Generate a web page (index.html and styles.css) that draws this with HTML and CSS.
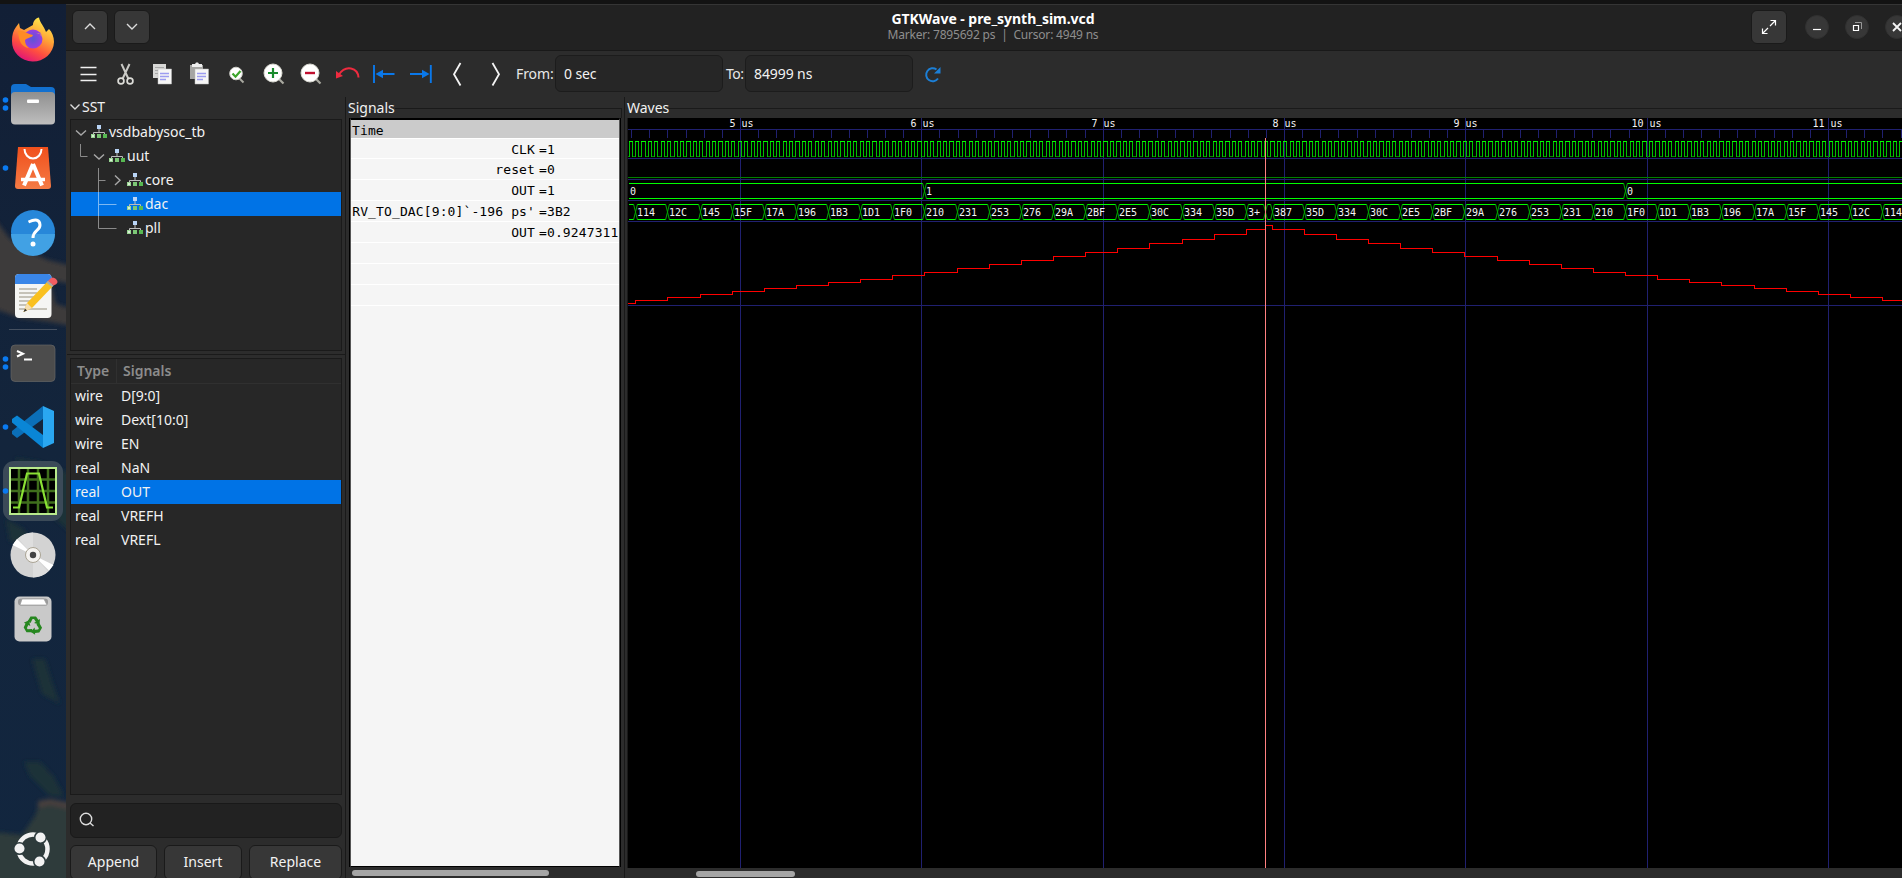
FILE: index.html
```html
<!DOCTYPE html>
<html lang="en">
<head>
<meta charset="utf-8">
<title>GTKWave - pre_synth_sim.vcd</title>
<link rel="stylesheet" href="styles.css">
</head>
<body>
<svg width="0" height="0" class="defs">
  <defs>
    <symbol id="hier" viewBox="0 0 16 14">
      <path d="M8 4v4M2.500 9V7.500h11V9" fill="none" stroke="#bdbdbd"/>
      <rect x="6" y="0" width="4" height="4" fill="#b9d5f7"/>
      <rect x="0" y="9" width="4" height="4" fill="#9ad594"/><rect x="6" y="9" width="4" height="4" fill="#7cc776"/><rect x="12" y="9" width="4" height="4" fill="#57b852"/>
      <rect x="1" y="10" width="2" height="2" fill="#d8f0d4"/>
    </symbol>
  </defs>
</svg>
<div class="desktop">
  <div class="topbar"></div>
  <nav class="dock">
    <svg class="wall" viewBox="0 0 66 874" preserveAspectRatio="none">
      <defs><filter id="soft"><feGaussianBlur stdDeviation="2"/></filter>
      <linearGradient id="sea" x2="0" y2="1"><stop offset="0" stop-color="#121f36"/><stop offset=".5" stop-color="#13253c"/><stop offset="1" stop-color="#12263f"/></linearGradient></defs>
      <rect width="66" height="874" fill="url(#sea)"/>
      <g filter="url(#soft)">
        <path d="M-5 215L10 235 30 248 48 256 72 262V280L50 276 56 300 72 305V322L50 318 20 314-5 305Z" fill="#3d3b3b"/>
        <path d="M15 454L40 458 72 470V530L50 510 30 480Z" fill="#1c3139"/>
        <path d="M6 515L24 525 32 538H10Z" fill="#1c3139"/>
        <path d="M32 655H45L52 678 60 700 42 690Z" fill="#1b3039"/>
        <path d="M24 758L40 758 54 773 64 792 50 792 30 772Z" fill="#1d3239"/>
        <path d="M38 797L50 795 72 799V816H38Z" fill="#48403e"/>
        <path d="M38 804L50 801 72 806V885H-5V828L22 831 35 812Z" fill="#2e3b3a"/>
      </g>
    </svg>
    <svg class="slot" viewBox="0 0 66 64"><defs>
      <linearGradient id="ff" x1=".8" y1="0" x2=".3" y2="1"><stop offset="0" stop-color="#fff44f"/><stop offset=".4" stop-color="#ffa436"/><stop offset=".7" stop-color="#ff4f3f"/><stop offset="1" stop-color="#e0127a"/></linearGradient>
      <radialGradient id="ffp"><stop offset="0" stop-color="#5b55d6"/><stop offset="1" stop-color="#9a3fe0"/></radialGradient></defs>
      <path d="M16 20L19 16 20 21 24 23 33 18C33 14 36 11 39 10.500C40 16 44 19 46 25L49 22C52 25 54 30 54 35A21 20 0 0 1 12 34C12 28 13 24 16 20Z" fill="url(#ff)"/>
      <circle cx="33" cy="32" r="9.500" fill="url(#ffp)"/><path d="M18 24C23 23 27 27 33 28 32 31 28 30 25 33 25 36 26 39 29 41 21 40 19 34 18 24Z" fill="#ff8b25"/><path d="M36 26Q41 26 42 30L39 26Z" fill="#ffd340"/></svg>
    <svg class="slot" viewBox="0 0 66 64"><defs><linearGradient id="gr" x2="0" y2="1"><stop stop-color="#8f8f8f"/><stop offset="1" stop-color="#bebebe"/></linearGradient></defs>
      <path d="M11 30V17Q11 13 15 13H26L31 16H51Q55 16 55 20V30Z" fill="#1270cf"/><rect x="11" y="21" width="44" height="32.500" rx="4" fill="url(#gr)"/><rect x="27" y="28.500" width="12" height="3.500" rx="1" fill="#fff"/>
      <circle cx="5.500" cy="29" r="2.800" fill="#0a7af0"/><circle cx="5.500" cy="37" r="2.800" fill="#0a7af0"/></svg>
    <svg class="slot" viewBox="0 0 66 64"><defs><linearGradient id="or" x2="0" y2="1"><stop stop-color="#f0501c"/><stop offset="1" stop-color="#f47b45"/></linearGradient></defs>
      <path d="M18 12H48L51 51Q51 54 48 54H18Q15 54 15 51Z" fill="url(#or)"/><path d="M24.500 14A8.500 9.500 0 0 0 41.500 14" fill="none" stroke="#fff" stroke-width="2"/>
      <path d="M33 29L24 50.500M33 29L42 50.500" stroke="#fff" stroke-width="4"/><path d="M21 44.500H45" stroke="#fff" stroke-width="3.500"/><circle cx="5.500" cy="33" r="2.800" fill="#0a7af0"/></svg>
    <svg class="slot" viewBox="0 0 66 64"><circle cx="33" cy="33" r="22" fill="#2787d9"/><path d="M11 35H55A22 22 0 0 1 11 35Z" fill="#41a1e4"/><path d="M28.500 23Q39.500 18 40 26C40 32 33 31 33 39" fill="none" stroke="#fff" stroke-width="3"/><circle cx="33" cy="45" r="2.500" fill="#fff"/></svg>
    <svg class="slot" viewBox="0 0 66 64"><rect x="15" y="11" width="36.500" height="44" rx="4" fill="#f5f5f3"/><path d="M15 21V15Q15 11 19 11H47.500Q51.500 11 51.500 15V21Z" fill="#3a86e8"/><path d="M19 26H37M19 30H37M19 34H35M19 38H31M19 42H28M19 46H47" stroke="#c5c2b8" stroke-width="2"/><path d="M48 18L53.500 22.500 32 45 23.500 49 27 40Z" fill="#f9c01f"/><path d="M27 40L32 45 23.500 49Z" fill="#f6deae"/><path d="M23.500 49L25 45.500 27 47.500Z" fill="#333"/><path d="M48 18Q52 12 56 16T53.500 22.500Z" fill="#f25d62"/><path d="M46.500 19.500L52 24 53.500 22.500 48 18Z" fill="#aaa"/></svg>
    <div class="rule"></div>
    <svg class="slot" viewBox="0 0 66 64"><rect x="11" y="14" width="44" height="36.500" rx="4" fill="#4c4c4c" stroke="#666" stroke-width=".7"/><path d="M17 20L23 22.700 17 25.500M24 28.500H32" fill="none" stroke="#fff" stroke-width="2"/><circle cx="5.500" cy="28" r="2.800" fill="#0a7af0"/><circle cx="5.500" cy="36" r="2.800" fill="#0a7af0"/></svg>
    <svg class="slot" viewBox="0 0 66 64"><path d="M43 11L54 16V48L43 53Z" fill="#2aa7f1"/><path d="M43 11V24L17 43 12 39V36Z" fill="#0b6fb8"/><path d="M43 53V40L17 20.500 12 24V27.500Z" fill="#0a86d6"/><circle cx="5.500" cy="32" r="2.800" fill="#0a7af0"/></svg>
    <svg class="slot" viewBox="0 0 66 64"><rect x="3" y="2" width="60" height="60" rx="11" fill="#3b4a58"/><rect x="10" y="9" width="46" height="46" fill="#000"/><path d="M19 9V55M28 9V55M38 9V55M48 9V55M10 20.500H56M10 32H56M10 43.500H56" stroke="#3f6e1c" stroke-width="2.500"/><rect x="10" y="9" width="46" height="46" fill="none" stroke="#b9ea8c" stroke-width="2"/><path d="M13 48.500H19L27 14.500H39L47 48.500H53" fill="none" stroke="#8ae234" stroke-width="2.200"/><circle cx="5.500" cy="32" r="2.800" fill="#0a7af0"/></svg>
    <svg class="slot" viewBox="0 0 66 64"><circle cx="33" cy="32" r="22.500" fill="#d3d3d3"/><path d="M33 32L12.500 22 17 16ZM33 32L53.500 42 49 47.500Z" fill="#fff"/><path d="M33 32V9.500A22.500 22.500 0 0 0 18 15.500ZM33 32V54.500A22.500 22.500 0 0 0 48 48.500Z" fill="#dedede"/><circle cx="33" cy="32" r="7.500" fill="#f5f3f0" stroke="#aaa494"/><circle cx="33" cy="32" r="3.200" fill="#444"/></svg>
    <svg class="slot" viewBox="0 0 66 64"><rect x="14.500" y="9.500" width="37" height="45" rx="5" fill="#c9c9c9"/><rect x="18" y="11.500" width="30" height="7" rx="3" fill="#999"/><path d="M20 18L22 12H44L47 18Z" fill="#fff" stroke="#999" stroke-width=".7"/>
      <g transform="translate(33 38.500)" fill="#26871f"><g id="arm"><path d="M-5.500 -4L-2.500 -9H3L5.500 -5.500 7 -6.500 6.500 -1 1 -2.500 2.800 -3.800 1 -6.500H-.5L-2.500 -2.500Z"/></g><use href="#arm" transform="rotate(120)"/><use href="#arm" transform="rotate(240)"/></g></svg>
    <svg class="slot apps" viewBox="0 0 66 64"><circle cx="33" cy="32" r="14.500" fill="none" stroke="#f2f2f2" stroke-width="4.500" stroke-dasharray="23 7.370" stroke-dashoffset="-3.700" transform="rotate(180 33 32)"/><g fill="#f2f2f2" stroke="#2c3a3c" stroke-width="1.500"><circle cx="19.500" cy="31.500" r="5.800"/><circle cx="40.500" cy="20.500" r="5.800"/><circle cx="39.500" cy="44.500" r="5.800"/></g></svg>
  </nav>

  <main class="window">
    <header class="titlebar">
      <div class="side">
        <button class="hb"><svg width="12" height="8"><path d="M1 6l5-5 5 5" class="ln"/></svg></button>
        <button class="hb"><svg width="12" height="8"><path d="M1 1l5 5 5-5" class="ln"/></svg></button>
      </div>
      <div class="titles"><div class="title">GTKWave - pre_synth_sim.vcd</div><div class="subtitle">Marker: 7895692 ps&nbsp; |&nbsp; Cursor: 4949 ns</div></div>
      <div class="side right">
        <button class="hb full"><svg width="16" height="16"><path d="M9.500 1.500h5v5M14 2L9 7M1.500 9.500v5h5M2 14l5-5" class="ln w"/></svg></button>
        <button class="wb"><svg width="10" height="10"><path d="M1 7.500h8" class="ln w" /></svg></button>
        <button class="wb"><svg width="10" height="10"><path d="M1.500 3.500h5v5h-5z" class="ln w"/><path d="M3 .500h6.500V7" class="ln dim"/></svg></button>
        <button class="wb"><svg width="10" height="10"><path d="M1 1l8 8M9 1l-8 8" class="ln w2"/></svg></button>
      </div>
    </header>

    <div class="toolbar">
      <svg class="ti" viewBox="0 0 37 32"><path d="M10.500 9.500h16M10.500 16.500h16M10.500 22.500h16" stroke="#f0f0f0" stroke-width="1.400"/></svg>
      <svg class="ti" viewBox="0 0 37 32"><path d="M14.500 6L21.500 21M22.500 6L15.500 21" stroke="#c9c9c5" stroke-width="2" fill="none"/><g fill="none" stroke="#dcdcd8" stroke-width="1.700"><circle cx="14" cy="23" r="2.900"/><circle cx="23" cy="23" r="2.900"/></g></svg>
      <svg class="ti" viewBox="0 0 37 32"><path d="M9 6h13v14H9z" fill="#d8d8d6"/><path d="M11 9.500h9M11 12.500h9M11 15.500h4" stroke="#a8a8a8"/><path d="M14 11h13.500v15H14z" fill="#f6f6f6" stroke="#bbb" stroke-width=".5"/><path d="M16 15.500h9M16 18.500h9M16 21.500h6" stroke="#9c9cf0" stroke-width="1.300"/></svg>
      <svg class="ti" viewBox="0 0 37 32"><path d="M9 7h13v14H9z" fill="#a5a5a3"/><path d="M11 6h3l1-1.500h2L18 6h3v3H11z" fill="#eee"/><path d="M14 11h13.500v15H14z" fill="#f6f6f6" stroke="#bbb" stroke-width=".5"/><path d="M16 15.500h9M16 18.500h9M16 21.500h6" stroke="#9c9cf0" stroke-width="1.300"/></svg>
      <svg class="ti" viewBox="0 0 37 32"><path d="M21 20l4.500 4.500" stroke="#a9a9a0" stroke-width="2"/><circle cx="18" cy="15.500" r="6.300" fill="#fff" stroke="#d0d0ca"/><path d="M14.500 15.500l3 3.200L22.500 13" fill="none" stroke="#3da52c" stroke-width="2.200"/></svg>
      <svg class="ti" viewBox="0 0 37 32"><path d="M23 20l5.500 5.500" stroke="#a9a9a0" stroke-width="2.200"/><circle cx="18" cy="15" r="9" fill="#fff" stroke="#d8d8d0"/><path d="M13 15h10M18 10v10" stroke="#188a2c" stroke-width="2.200"/></svg>
      <svg class="ti" viewBox="0 0 37 32"><path d="M23 20l5.500 5.500" stroke="#a9a9a0" stroke-width="2.200"/><circle cx="18" cy="15" r="9" fill="#fff" stroke="#d8d8d0"/><path d="M13 15h10" stroke="#c01030" stroke-width="2.400"/></svg>
      <svg class="ti" viewBox="0 0 37 32"><path d="M9.500 17Q15 9 22 10.500 29 12 29.500 19.500" fill="none" stroke="#ee2b3f" stroke-width="2"/><path d="M7 13v7.500l7-2.500z" fill="#ee2b3f"/></svg>
      <svg class="ti" viewBox="0 0 37 32"><path d="M8 7v18M12 16h16.500" stroke="#0a78ea" stroke-width="1.900"/><path d="M9.500 16l7.500-4.200v8.400z" fill="#0a78ea"/></svg>
      <svg class="ti" viewBox="0 0 37 32"><path d="M27.800 7v18M7 16h16" stroke="#0a78ea" stroke-width="1.900"/><path d="M26.500 16L19 11.800v8.400z" fill="#0a78ea"/></svg>
      <svg class="ti" viewBox="0 0 37 32"><path d="M20.500 5L14 16.200 20.500 27.500" class="ln w2"/></svg>
      <svg class="ti" viewBox="0 0 37 32"><path d="M15.500 5L22 16.200 15.500 27.500" class="ln w2"/></svg>
      <span class="lab from">From:</span><div class="entry">0 sec</div>
      <span class="lab to">To:</span><div class="entry">84999 ns</div>
      <svg class="ti" viewBox="0 0 37 32"><path d="M25 20.500A6.500 6.500 0 1 1 23.500 11.500" fill="none" stroke="#1c7fd6" stroke-width="2"/><path d="M27.500 9v6.500h-6.500z" fill="#1c7fd6"/></svg>
    </div>

    <div class="panes">
      <aside class="left">
        <div class="sst"><svg width="12" height="8"><path d="M1.500 1.500l4.500 4.500 4.500-4.500" class="ln"/></svg><span>SST</span></div>
        <div class="box tree">
          <div class="tr"><svg width="20" height="24"><path d="M5 10.500l5 4.500 5-4.500" class="ln g"/></svg><svg class="hi"><use href="#hier"/></svg><span>vsdbabysoc_tb</span></div>
          <div class="tr"><svg width="38" height="24"><path d="M9.500 0v12.500h7" class="br"/><path d="M23 10.500l5 4.500 5-4.500" class="ln g"/></svg><svg class="hi"><use href="#hier"/></svg><span>uut</span></div>
          <div class="tr"><svg width="56" height="24"><path d="M27.500 0v24M27.500 12.500h7" class="br"/><path d="M44 7.500l5 4.700-5 4.700" class="ln g"/></svg><svg class="hi"><use href="#hier"/></svg><span>core</span></div>
          <div class="tr sel"><svg width="56" height="24"><path d="M27.500 0v24M27.500 12.500h18" class="br"/></svg><svg class="hi"><use href="#hier"/></svg><span>dac</span></div>
          <div class="tr"><svg width="56" height="24"><path d="M27.500 0v12.500h18" class="br"/></svg><svg class="hi"><use href="#hier"/></svg><span>pll</span></div>
        </div>
        <div class="splitter"></div>
        <div class="box list">
          <div class="lh"><span class="c1">Type</span><span class="c2">Signals</span></div>
          <div class="lr"><span class="c1">wire</span><span>D[9:0]</span></div>
          <div class="lr"><span class="c1">wire</span><span>Dext[10:0]</span></div>
          <div class="lr"><span class="c1">wire</span><span>EN</span></div>
          <div class="lr"><span class="c1">real</span><span>NaN</span></div>
          <div class="lr sel"><span class="c1">real</span><span>OUT</span></div>
          <div class="lr"><span class="c1">real</span><span>VREFH</span></div>
          <div class="lr"><span class="c1">real</span><span>VREFL</span></div>
        </div>
        <div class="search"><svg width="16" height="16"><circle cx="7" cy="7" r="5.700" class="ln"/><path d="M11 11l3.500 3" class="ln"/></svg></div>
        <div class="btns"><button class="b1">Append</button><button class="b2">Insert</button><button class="b3">Replace</button></div>
      </aside>

      <section class="signals">
        <div class="cap"><span>Signals</span><i></i></div>
        <div class="sigbody">
          <div class="sg time">Time</div>
          <div class="sg s1"><span class="n">CLK</span><span>=1</span></div>
          <div class="sg"><span class="n">reset</span><span>=0</span></div>
          <div class="sg"><span class="n">OUT</span><span>=1</span></div>
          <div class="sg"><span class="n">RV_TO_DAC[9:0]`-196 ps'</span><span>=3B2</span></div>
          <div class="sg"><span class="n">OUT</span><span>=0.9247311</span></div>
          <div class="sg"></div><div class="sg"></div><div class="sg"></div>
        </div>
        <div class="scroll"><div class="thumb t1"></div></div>
      </section>

      <section class="waves">
        <div class="cap"><span>Waves</span><i></i></div>
        <svg id="wave" width="1274" height="750" viewBox="628 118 1274 750"></svg>
        <div class="scroll"><div class="thumb t2"></div></div>
      </section>
    </div>
  </main>
</div>
<script src="wave.js"></script>
</body>
</html>
```
FILE: styles.css
```css
* { box-sizing: border-box; }
body { margin: 0; background: #131313; overflow: hidden; font-family: "Noto Sans", "Open Sans", sans-serif; font-size: 14px; color: #f2f2f2; }
.defs { position: absolute; }
button { font: inherit; color: inherit; padding: 0; display: flex; align-items: center; justify-content: center; }
svg { display: block; flex: none; }
.desktop { width: 1902px; height: 878px; display: grid; grid-template: 4px 874px / 66px 1836px; overflow: hidden; }
.topbar { grid-column: 1 / 3; background: #131313; }
.dock { position: relative; display: flex; flex-direction: column; padding-top: 3px; height: 874px; overflow: hidden; }
.wall { position: absolute; inset: 0; width: 66px; height: 874px; }
.slot { width: 66px; height: 64px; position: relative; }
.rule { width: 48px; height: 1px; margin: 2px 0 1px 9px; background: #455060; position: relative; }
.apps { margin-top: auto; margin-bottom: -3px; }
.window { background: #2c2c2c; display: flex; flex-direction: column; height: 874px; overflow: hidden; }
.ln { fill: none; stroke: #dcdcdc; stroke-width: 1.4; }
.ln.w { stroke: #fff; stroke-width: 1.2; }
.ln.w2 { stroke: #f4f4f4; stroke-width: 1.8; }
.ln.dim { stroke: #999; stroke-width: 1; }
.ln.g { stroke: #a8a8a8; }
.br { fill: none; stroke: #8a8a8a; }

.titlebar { height: 47px; flex: none; background: #222; border-top: 1px solid #353535; border-bottom: 1px solid #191919; display: grid; grid-template-columns: 600px 654px 582px; }
.side { display: flex; padding: 5px 0 0 6px; gap: 6px; }
.hb { width: 36px; height: 34px; border: 1px solid #1a1a1a; border-radius: 6px; background: #373737; flex: none; }
.titles { text-align: center; padding-top: 4px; white-space: nowrap; }
.title { font-weight: 700; font-size: 14px; line-height: 19px; color: #fff; letter-spacing: -.04px; }
.subtitle { font-size: 12px; line-height: 14px; color: #8e8e8e; letter-spacing: -.2px; }
.right { padding: 5px 0 0 431px; gap: 0; }
.wb { width: 24px; height: 24px; border: 1px solid #303030; border-radius: 50%; background: #373737; flex: none; margin: 5px 16px 0 0; }
.full { margin-right: 18px; }

.toolbar { height: 46px; flex: none; display: flex; align-items: center; padding-left: 4px; padding-bottom: 1px; }
.ti { width: 37px; height: 32px; }
.lab { white-space: nowrap; color: #e8e8e8; }
.from { width: 41px; padding-left: 2px; letter-spacing: -.1px; }
.to { width: 22px; padding-left: 3px; letter-spacing: -.5px; }
.entry { width: 168px; height: 37px; border: 1px solid #1c1c1c; border-radius: 6px; background: #262626; padding-left: 8px; line-height: 35px; letter-spacing: -.1px; }

.panes { flex: 1; display: grid; grid-template-columns: 279px 279px 1278px; min-height: 0; }
.left { display: flex; flex-direction: column; padding: 0 3px 0 4px; overflow: hidden; }
.sst { height: 22px; display: flex; align-items: center; gap: 1px; padding-bottom: 3px; flex: none; margin-left: -1px; }
.box { border: 1px solid #1a1a1a; background: #272727; flex: none; }
.tree { height: 232px; }
.tr { height: 24px; display: flex; line-height: 23px; }
.tr span { padding-left: 2px; }
.hi { width: 16px; height: 14px; margin-top: 5px; }
.sel { background: #0073e6; }
.sel .br { stroke: #7db8f2; }
.splitter { height: 4px; border-top: 1px solid #1a1a1a; margin: 3px -3px 0; flex: none; }
.list { height: 437px; }
.lh { height: 25px; display: flex; border-bottom: 1px solid #303030; line-height: 24px; font-weight: 600; color: #8c8c8c; }
.lh .c1 { padding-left: 6px; width: 46px; border-right: 1px solid #303030; }
.lh .c2 { padding-left: 6px; }
.lr { height: 24px; display: flex; line-height: 24px; }
.lr .c1 { width: 50px; padding-left: 4px; }
.search { height: 35px; margin-top: 8px; border: 1px solid #191919; border-radius: 6px; background: #222; flex: none; padding: 8px 0 0 8px; }
.btns { display: flex; gap: 7px; margin-top: 7px; flex: none; }
.btns button { height: 35px; border: 1px solid #1a1a1a; border-radius: 6px; background: #373737; padding-bottom: 2px; }
.b1 { width: 87px; } .b2 { width: 78px; } .b3 { width: 93px; }

.signals, .waves { border-left: 1px solid #191919; display: flex; flex-direction: column; overflow: hidden; }
.cap { height: 21px; display: flex; align-items: flex-start; line-height: 21px; padding-left: 2px; flex: none; }
.cap span { white-space: nowrap; }
.cap i { flex: 1; height: 10px; margin-top: 11px; border-top: 1px solid #1a1a1a; }
.signals .cap i { border-right: 1px solid #1a1a1a; margin-right: 2px; }
.sigbody { margin: 0 4px; height: 749px; background: #f5f5f5; border: 1px solid #000; border-top-width: 2px; border-left-color: #555; border-right-color: #555; color: #000; font-family: "DejaVu Sans Mono", monospace; font-size: 13px; letter-spacing: .12px; overflow: hidden; flex: none; box-shadow: -1px 0 #000, 1px 0 #000; }
.sg { height: 21px; line-height: 22px; border-bottom: 1px solid #fff; display: flex; white-space: pre; }
.sg .n { width: 184px; text-align: right; flex: none; margin-right: 4px; }
.time { height: 19px; line-height: 21px; background: #cbcbcb; padding-left: 1px; }
.s1 { height: 20px; line-height: 21px; }
.scroll { height: 10px; padding-top: 3px; flex: none; }
.thumb { height: 6px; border-radius: 3px; background: #a5a5a5; }
.t1 { width: 197px; margin-left: 6px; }
.t2 { width: 99px; margin-left: 71px; }
#wave { background: #000; margin-left: 3px; box-shadow: -1px 0 #191919; font-family: "DejaVu Sans Mono", monospace; font-size: 10px; fill: none; shape-rendering: crispEdges; }
#wave text { fill: #f4f4f4; }
.navy { stroke: #202070; }
.hi1 { stroke: #00ff00; }
.mid { stroke: #00c000; }
.edge { stroke: #00a800; shape-rendering: auto; }
.low { stroke: #008000; }
.red { stroke: #ff0000; }
.marker { stroke: #ff8080; }
```
FILE: wave.js
```js
const svg = document.getElementById('wave');
const NS = 'http://www.w3.org/2000/svg';
const LEFT = 628, RIGHT = 1902;

function path(cls, d) {
  const p = document.createElementNS(NS, 'path');
  p.setAttribute('class', cls);
  p.setAttribute('d', d);
  svg.appendChild(p);
}
function label(x, y, s) {
  const t = document.createElementNS(NS, 'text');
  t.setAttribute('x', x);
  t.setAttribute('y', y);
  t.textContent = s;
  svg.appendChild(t);
}

// time grid
let grid = `M${LEFT} 129.5H${RIGHT}`;
for (const y of [158, 179, 200, 221, 305]) grid += `M${LEFT} ${y + .5}H${RIGHT}`;
for (let k = -6; k <= 64; k++) {
  const x = Math.floor(740.5 + 18.1333 * k) + .5;
  grid += k % 10 === 0 ? `M${x} 118V868` : `M${x} 129V138`;
}
path('navy', grid);

// clock
let hi = '', lo = '', ed = '';
for (let n = 0; ; n++) {
  const a = Math.floor(629.1 + 3.2085 * n), b = Math.floor(629.1 + 3.2085 * (n + 1));
  if (a > RIGHT) break;
  ed += `M${a + .5} 141V157`;
  if (n % 2 === 0) hi += `M${a} 141.5H${b + 1}`;
  else lo += `M${a + 1} 156.5H${b}`;
}
path('low', lo + `M${LEFT} 156.5h1M${LEFT} 177.5H${RIGHT}`);
path('mid', ed);
path('hi1', hi);

// bus traces
function bus(top, bottom, items) {
  let lines = '', edges = '';
  items.forEach(([x, s], i) => {
    const next = i + 1 < items.length ? items[i + 1][0] - 1 : RIGHT;
    const start = i === 0 ? x : x + 2;
    if (next > start) lines += `M${start} ${top + .5}H${next}M${start} ${bottom + .5}H${next}`;
    if (i) edges += `M${x - 1.5} ${top}L${x + 2.5} ${bottom + 1}M${x + 2.5} ${top}L${x - 1.5} ${bottom + 1}`;
    label(i === 0 ? x + 1 : x + 2, bottom - 4 + .5, s);
  });
  path('hi1', lines);
  path('edge', edges);
}
bus(183, 198, [[629, '0'], [924, '1'], [1625, '0']]);

const steps = [
  [629, '', 303], [635, '114', 300], [667, '12C', 297], [700, '145', 294], [732, '15F', 291],
  [764, '17A', 288], [796, '196', 285], [828, '1B3', 282], [860, '1D1', 279], [892, '1F0', 275],
  [924, '210', 272], [957, '231', 268], [989, '253', 264], [1021, '276', 260], [1053, '29A', 256],
  [1085, '2BF', 252], [1117, '2E5', 248], [1149, '30C', 243], [1182, '334', 239], [1214, '35D', 234],
  [1246, '3+', 229], [1265, '', 225], [1272, '387', 229], [1304, '35D', 234], [1336, '334', 239],
  [1368, '30C', 243], [1400, '2E5', 248], [1432, '2BF', 252], [1464, '29A', 256], [1497, '276', 260],
  [1529, '253', 264], [1561, '231', 268], [1593, '210', 272], [1625, '1F0', 275], [1657, '1D1', 279],
  [1689, '1B3', 282], [1721, '196', 285], [1754, '17A', 288], [1786, '15F', 291], [1818, '145', 294],
  [1850, '12C', 297], [1882, '114', 300]
];
bus(204, 219, steps);

// analog output
let d = `M${LEFT} 303.5`;
steps.slice(1).forEach(([x, , y]) => { d += `H${x + .5}V${y + .5}`; });
path('red', d + `H${RIGHT}`);

path('marker', 'M1265.5 138V868');

[[729, '5 us'], [910, '6 us'], [1091, '7 us'], [1272, '8 us'], [1453, '9 us'], [1631, '10 us'], [1812, '11 us']]
  .forEach(([x, s]) => label(x + .5, 127, s));
```
